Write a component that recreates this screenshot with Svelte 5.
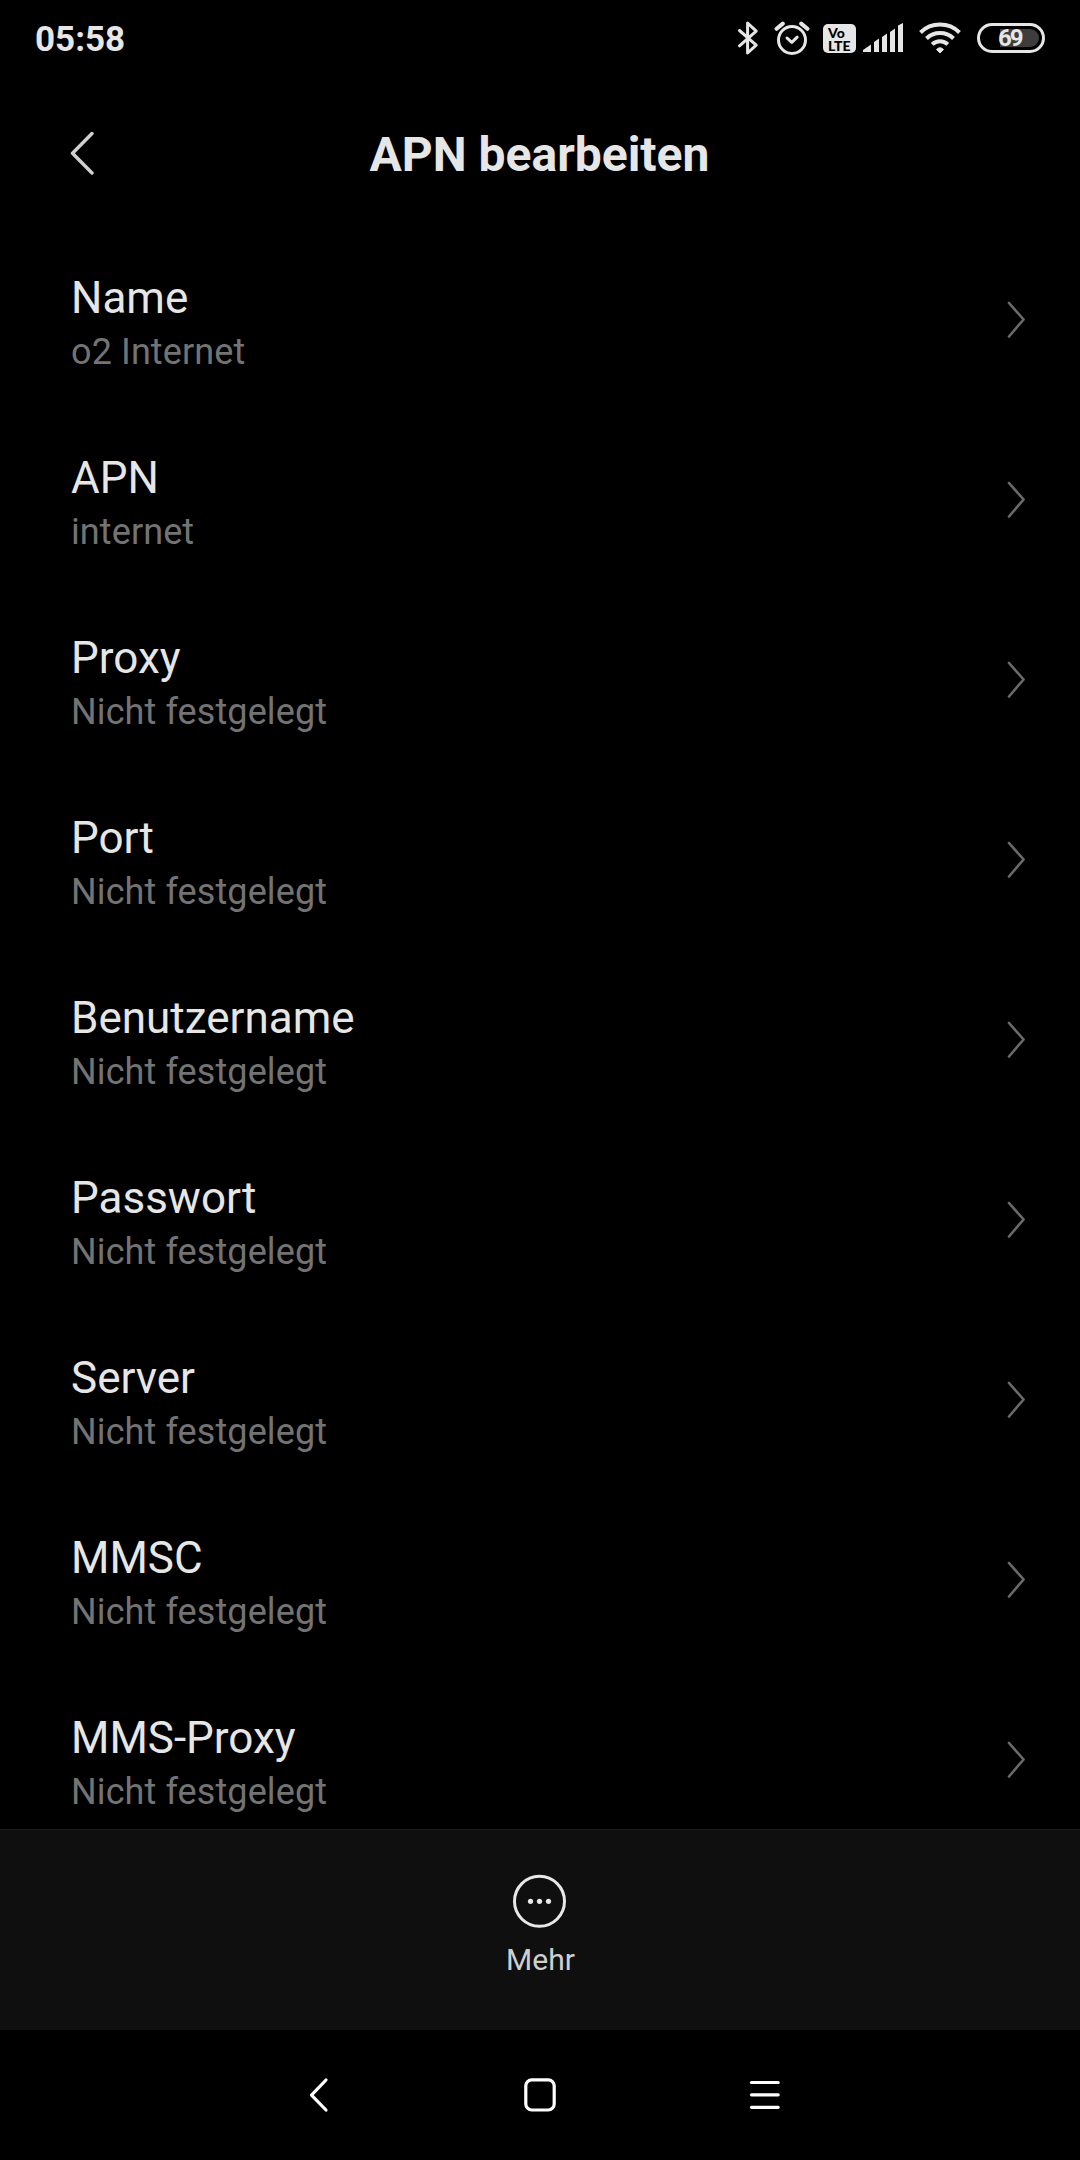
<script lang="ts">
  type Entry = { title: string; value: string };

  const unset = 'Nicht festgelegt';

  let entries: Entry[] = [
    { title: 'Name', value: 'o2 Internet' },
    { title: 'APN', value: 'internet' },
    { title: 'Proxy', value: unset },
    { title: 'Port', value: unset },
    { title: 'Benutzername', value: unset },
    { title: 'Passwort', value: unset },
    { title: 'Server', value: unset },
    { title: 'MMSC', value: unset },
    { title: 'MMS-Proxy', value: unset }
  ];
</script>

<svelte:head>
  <title>APN bearbeiten</title>
</svelte:head>

<div class="screen">
  <div class="status-bar">
    <span class="clock">05:58</span>
    <div class="status-icons">
      <!-- bluetooth -->
      <svg class="bluetooth" width="24" height="36" viewBox="0 0 24 36">
        <path d="M3.5 10.5 L20.2 25.2 L11.6 33 V3 L20.2 11.2 L3.5 25.8" />
      </svg>
      <!-- alarm -->
      <svg class="alarm" width="36" height="36" viewBox="0 0 36 36">
        <circle cx="18" cy="20" r="13.5" />
        <path d="M13 18 L17.8 22.4 L23.2 17.2" />
        <path class="bell" d="M2.6 8.8 L8.8 3.6 M33.4 8.8 L27.2 3.6" />
      </svg>
      <div class="volte">
        <span class="vo">Vo</span>
        <span class="lte">LTE</span>
      </div>
      <!-- signal -->
      <svg class="signal" width="40" height="30" viewBox="0 0 40 30">
        <path d="M0 29 V27 L8 21.5 V29 Z M11 29 V19 L16 15.5 V29 Z M19 29 V14 L24 10.5 V29 Z M27 29 V9 L32 5.5 V29 Z M35 29 V2.5 L40 0 V29 Z" />
      </svg>
      <!-- wifi -->
      <svg class="wifi" width="42" height="32" viewBox="0 0 42 32">
        <path d="M1.5 10.5 A28 28 0 0 1 40.5 10.5" />
        <path d="M7.5 16.5 A19.5 19.5 0 0 1 34.5 16.5" />
        <path d="M13.2 22.4 A11.5 11.5 0 0 1 28.8 22.4" />
        <path class="dot" d="M17.5 27.5 Q21 24 24.5 27.5 L21 31 Z" />
      </svg>
      <div class="battery">
        <span class="charge"></span>
        <span class="percent">69</span>
      </div>
    </div>
  </div>

  <header>
    <button class="back" aria-label="Zurück">
      <svg width="24" height="44" viewBox="0 0 24 44">
        <path d="M22 2.5 L2.5 22.2 L22 42" />
      </svg>
    </button>
    <h1>APN bearbeiten</h1>
  </header>

  <main>
    {#each entries as entry}
      <div class="row">
        <div class="texts">
          <span class="title">{entry.title}</span>
          <span class="value">{entry.value}</span>
        </div>
        <svg class="chevron" width="20" height="38" viewBox="0 0 20 38">
          <path d="M2 2 L16.6 18.5 L2 35.5" />
        </svg>
      </div>
    {/each}
  </main>

  <div class="action-bar">
    <button class="more">
      <svg width="54" height="54" viewBox="0 0 54 54">
        <circle class="ring" cx="26.5" cy="27.3" r="25" />
        <circle cx="17.5" cy="27.3" r="2.6" />
        <circle cx="26.5" cy="27.3" r="2.6" />
        <circle cx="35.5" cy="27.3" r="2.6" />
      </svg>
      <span>Mehr</span>
    </button>
  </div>

  <nav>
    <svg width="34" height="36" viewBox="0 0 34 36">
      <path d="M26 3 L11.5 18.2 L26 33" />
    </svg>
    <svg width="34" height="36" viewBox="0 0 34 36">
      <rect x="2.8" y="2.8" width="28.4" height="30.2" rx="6" />
    </svg>
    <svg width="34" height="36" viewBox="0 0 34 36">
      <path d="M5.5 5.5 H32.2 M5.5 17.8 H32.2 M5.5 30.3 H32.2" />
    </svg>
  </nav>
</div>

<style>
  :global(body) {
    background: #000;
  }

  .screen {
    display: flex;
    flex-direction: column;
    width: 1080px;
    height: 2160px;
    overflow: hidden;
    background: #000;
    color: #e6e6e6;
    font-family: Roboto, sans-serif;
  }

  svg {
    display: block;
    flex: none;
    fill: none;
    stroke: #e6e6e6;
    stroke-linecap: round;
    stroke-linejoin: round;
  }

  button {
    padding: 0;
    border: none;
    background: none;
    color: inherit;
    font: inherit;
  }

  .status-bar {
    flex: none;
    display: flex;
    align-items: center;
    justify-content: space-between;
    height: 76px;
    padding: 0 35px;
  }

  .clock {
    font-size: 35px;
    font-weight: 700;
    line-height: 40px;
    padding-top: 4px;
  }

  .status-icons {
    display: flex;
    align-items: center;
  }

  .bluetooth {
    stroke-width: 3;
    margin-right: 14px;
  }

  .alarm {
    stroke-width: 3;
    margin-right: 13px;
  }

  .alarm .bell {
    stroke-width: 4;
  }

  .volte {
    display: flex;
    flex-direction: column;
    box-sizing: border-box;
    width: 33px;
    height: 29px;
    padding: 2px 0 0 5px;
    margin-right: 7px;
    border-radius: 5px;
    background: #e6e6e6;
    color: #000;
    font-family: Lato, sans-serif;
    font-size: 14px;
    font-weight: 900;
    line-height: 13px;
  }

  .signal {
    fill: #e6e6e6;
    stroke: none;
    margin-right: 16px;
  }

  .wifi {
    stroke-width: 4;
    stroke-linecap: butt;
    margin-right: 16px;
  }

  .wifi .dot {
    fill: #e6e6e6;
    stroke-width: 1;
  }

  .battery {
    position: relative;
    box-sizing: border-box;
    width: 68px;
    height: 30px;
    border: 3px solid #e6e6e6;
    border-radius: 15px;
  }

  .charge {
    position: absolute;
    top: 3px;
    right: 3px;
    width: 39px;
    height: 18px;
    border-radius: 0 9px 9px 0;
    background: #3d3d3d;
  }

  .percent {
    position: absolute;
    left: 18px;
    top: 0;
    font-size: 24px;
    font-weight: 700;
    line-height: 25px;
    letter-spacing: -2px;
  }

  header {
    flex: none;
    display: flex;
    align-items: center;
    height: 154px;
    padding: 0 70px;
  }

  .back {
    width: 24px;
  }

  .back svg {
    stroke-width: 3.4;
    stroke: #d0d0d0;
  }

  h1 {
    flex: 1;
    margin: 0 25px 0 0;
    padding-top: 4px;
    font-size: 48px;
    font-weight: 700;
    line-height: 56px;
    text-align: center;
  }

  main {
    flex: none;
    height: 1599px;
    overflow: hidden;
  }

  .row {
    display: flex;
    align-items: center;
    justify-content: space-between;
    box-sizing: border-box;
    height: 180px;
    padding: 0 53px 0 71px;
  }

  .texts {
    display: flex;
    flex-direction: column;
    gap: 7px;
    padding-top: 5px;
  }

  .title {
    font-size: 44px;
    line-height: 52px;
  }

  .value {
    font-size: 36px;
    line-height: 42px;
    letter-spacing: 0.1px;
    color: #737373;
  }

  .chevron {
    stroke: #6a6a6a;
    stroke-width: 2.6;
  }

  .action-bar {
    flex: none;
    display: flex;
    justify-content: center;
    box-sizing: border-box;
    height: 201px;
    padding-top: 44px;
    border-top: 1px solid #1c1c1c;
    background: #0f0f0f;
  }

  .more {
    display: flex;
    flex-direction: column;
    align-items: center;
    align-self: flex-start;
    gap: 14px;
    font-size: 30px;
    line-height: 36px;
    color: #cfcfcf;
  }

  .more svg {
    fill: #e8e8e8;
    stroke: none;
  }

  .more .ring {
    fill: none;
    stroke: #e8e8e8;
    stroke-width: 3;
  }

  .more span {
    padding-left: 1px;
  }

  nav {
    flex: 1;
    display: flex;
    justify-content: space-between;
    align-items: center;
    padding: 0 300px;
  }

  nav svg {
    stroke: #fff;
    stroke-width: 3.2;
  }
</style>
